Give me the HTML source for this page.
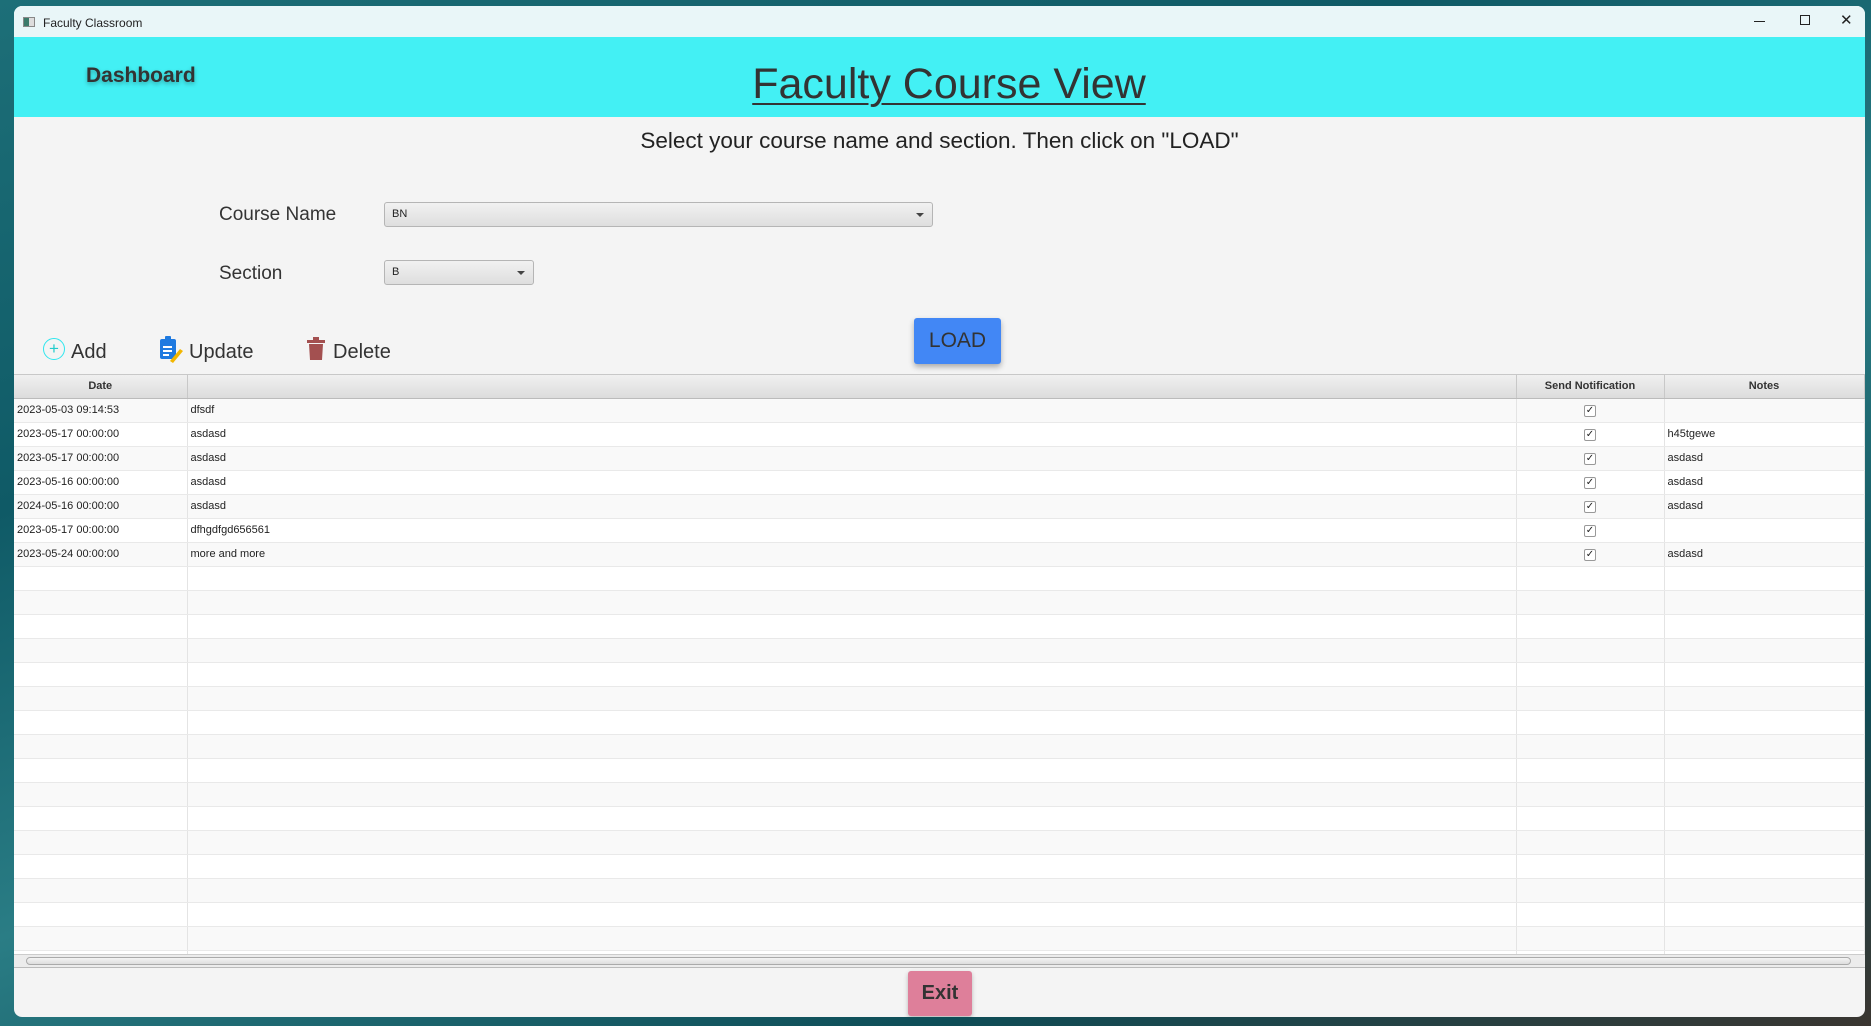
<!DOCTYPE html>
<html><head><meta charset="utf-8"><style>
*{margin:0;padding:0;box-sizing:border-box}
body{width:1871px;height:1026px;overflow:hidden;position:relative;font-family:"Liberation Sans",sans-serif;
background:linear-gradient(160deg,#1d6f78 0%,#0f5a66 30%,#2a7d85 55%,#0e4d57 80%,#3a3530 100%);}
.a{position:absolute}
#win{left:14px;top:6px;width:1851px;height:1011px;background:#f4f4f4;border-radius:8px;overflow:hidden}
#tb{left:0;top:0;width:1851px;height:31px;background:#e9f6f8;font-size:12px;color:#222}
#hd{left:0;top:31px;width:1851px;height:80px;background:#43f0f4}
.lbl{font-size:19px;color:#333}
.combo{background:linear-gradient(#f1f1f1,#dedede);border:1px solid #b5b5b5;border-radius:3px;font-size:11px;color:#222;padding:5px 7px}
.arr{position:absolute;right:8px;top:10px;border-left:4px solid transparent;border-right:4px solid transparent;border-top:4px solid #444}
.tool{font-size:20px;color:#333;top:335px}
table{border-collapse:collapse;table-layout:fixed;font-size:11px;color:#222}
td,th{height:24px;border-right:1px solid #e4e4e4;border-bottom:1px solid #e9e9e9;padding:0 3px;white-space:nowrap;overflow:hidden}
th{height:23px;background:linear-gradient(#f0f0f0,#dcdcdc);font-weight:bold;border-right:1px solid #c8c8c8;border-bottom:1px solid #bbb;text-align:center;color:#333}
tr:nth-child(even) td{background:#f9f9f9}
tr:nth-child(odd) td{background:#fff}
.cb{display:inline-block;width:12px;height:12px;border:1px solid #999;border-radius:2px;background:#fff;font-size:10px;line-height:10px;text-align:center;color:#222}
</style></head><body>
<div id="win" class="a">
 <div id="tb" class="a">
  <div class="a" style="left:9px;top:11px;width:12px;height:10px;border:1px solid #888;background:linear-gradient(90deg,#3b7a6a 50%,#ddd 50%)"></div>
  <div class="a" style="left:29px;top:10px">Faculty Classroom</div>
  <div class="a" style="left:1740px;top:15px;width:11px;height:1px;background:#222"></div>
  <div class="a" style="left:1786px;top:9px;width:10px;height:10px;border:1px solid #222"></div>
  <div class="a" style="left:1826px;top:5px;font-size:15px;color:#222">✕</div>
 </div>
 <div id="hd" class="a">
  <div class="a" style="left:72px;top:27px;font-size:21px;font-weight:bold;color:#333;text-shadow:0 2px 4px rgba(0,0,0,.3)">Dashboard</div>
  <div class="a" style="left:0;width:1870px;top:23px;text-align:center;font-size:43px;color:#333;text-decoration:underline;text-decoration-thickness:2px;text-underline-offset:5px">Faculty Course View</div>
 </div>
 <div class="a" style="left:0;width:1851px;top:122px;text-align:center;font-size:22.5px;color:#222">Select your course name and section. Then click on "LOAD"</div>
 <div class="a lbl" style="left:205px;top:198px">Course Name</div>
 <div class="a combo" style="left:370px;top:196px;width:549px;height:25px">BN<span class="arr"></span></div>
 <div class="a lbl" style="left:205px;top:257px">Section</div>
 <div class="a combo" style="left:370px;top:254px;width:150px;height:25px">B<span class="arr"></span></div>
 <div class="a" style="left:900px;top:312px;width:87px;height:46px;background:#4287f5;border-radius:3px;box-shadow:0 3px 6px rgba(0,0,0,.3);font-size:21px;color:#333;text-align:center;line-height:46px">LOAD</div>
 <div class="a" style="left:29px;top:332px;width:22px;height:22px;border:1.5px solid #2ee6ee;border-radius:50%;color:#2cc;font-size:17px;text-align:center;line-height:19px">+</div>
 <div class="a tool" style="left:57px">Add</div>
 <svg class="a" style="left:144px;top:329px" width="26" height="28" viewBox="0 0 26 28"><rect x="2" y="4" width="16" height="20" rx="2" fill="#1f7ae0"/><rect x="7" y="1" width="6" height="5" rx="1" fill="#1f7ae0"/><rect x="5" y="11" width="9" height="2" fill="#fff"/><rect x="5" y="15" width="9" height="2" fill="#fff"/><rect x="5" y="19" width="6" height="2" fill="#fff"/><path d="M12 26 L22 14 L25 16 L15 28 Z" fill="#f2b600"/></svg>
 <div class="a tool" style="left:175px">Update</div>
 <svg class="a" style="left:292px;top:331px" width="20" height="24" viewBox="0 0 20 24"><rect x="1" y="3" width="18" height="3" fill="#a35050"/><rect x="7" y="0" width="6" height="4" fill="#a35050"/><path d="M3 7 H17 L16 23 H4 Z" fill="#a35050"/></svg>
 <div class="a tool" style="left:319px">Delete</div>
 <div class="a" style="left:0;top:368px;width:1851px;height:586px;background:#fff;border-top:1px solid #c8c8c8;overflow:hidden">
 <table style="width:1850px">
  <colgroup><col style="width:173px"><col style="width:1329px"><col style="width:148px"><col style="width:200px"></colgroup>
  <tr><th>Date</th><th></th><th>Send Notification</th><th>Notes</th></tr>
  <tr><td>2023-05-03 09:14:53</td><td>dfsdf</td><td style="text-align:center"><span class="cb">✓</span></td><td></td></tr>
  <tr><td>2023-05-17 00:00:00</td><td>asdasd</td><td style="text-align:center"><span class="cb">✓</span></td><td>h45tgewe</td></tr>
  <tr><td>2023-05-17 00:00:00</td><td>asdasd</td><td style="text-align:center"><span class="cb">✓</span></td><td>asdasd</td></tr>
  <tr><td>2023-05-16 00:00:00</td><td>asdasd</td><td style="text-align:center"><span class="cb">✓</span></td><td>asdasd</td></tr>
  <tr><td>2024-05-16 00:00:00</td><td>asdasd</td><td style="text-align:center"><span class="cb">✓</span></td><td>asdasd</td></tr>
  <tr><td>2023-05-17 00:00:00</td><td>dfhgdfgd656561</td><td style="text-align:center"><span class="cb">✓</span></td><td></td></tr>
  <tr><td>2023-05-24 00:00:00</td><td>more and more</td><td style="text-align:center"><span class="cb">✓</span></td><td>asdasd</td></tr>
  <tr><td></td><td></td><td></td><td></td></tr><tr><td></td><td></td><td></td><td></td></tr>
  <tr><td></td><td></td><td></td><td></td></tr><tr><td></td><td></td><td></td><td></td></tr>
  <tr><td></td><td></td><td></td><td></td></tr><tr><td></td><td></td><td></td><td></td></tr>
  <tr><td></td><td></td><td></td><td></td></tr><tr><td></td><td></td><td></td><td></td></tr>
  <tr><td></td><td></td><td></td><td></td></tr><tr><td></td><td></td><td></td><td></td></tr>
  <tr><td></td><td></td><td></td><td></td></tr><tr><td></td><td></td><td></td><td></td></tr>
  <tr><td></td><td></td><td></td><td></td></tr><tr><td></td><td></td><td></td><td></td></tr>
  <tr><td></td><td></td><td></td><td></td></tr><tr><td></td><td></td><td></td><td></td></tr>
  <tr><td></td><td></td><td></td><td></td></tr>
 </table>
 </div>
 <div class="a" style="left:0;top:948px;width:1851px;height:14px;background:#ececec;border-top:1px solid #ccc;border-bottom:1px solid #bbb">
  <div class="a" style="left:12px;top:2px;width:1825px;height:8px;border:1px solid #aaa;border-radius:4px;background:linear-gradient(#f4f4f4,#ddd)"></div>
 </div>
 <div class="a" style="left:894px;top:965px;width:64px;height:45px;background:#de7f9a;border-radius:3px;box-shadow:0 2px 5px rgba(0,0,0,.25);font-size:20px;font-weight:bold;color:#333;text-align:center;line-height:45px">Exit</div>
</div>
</body></html>
